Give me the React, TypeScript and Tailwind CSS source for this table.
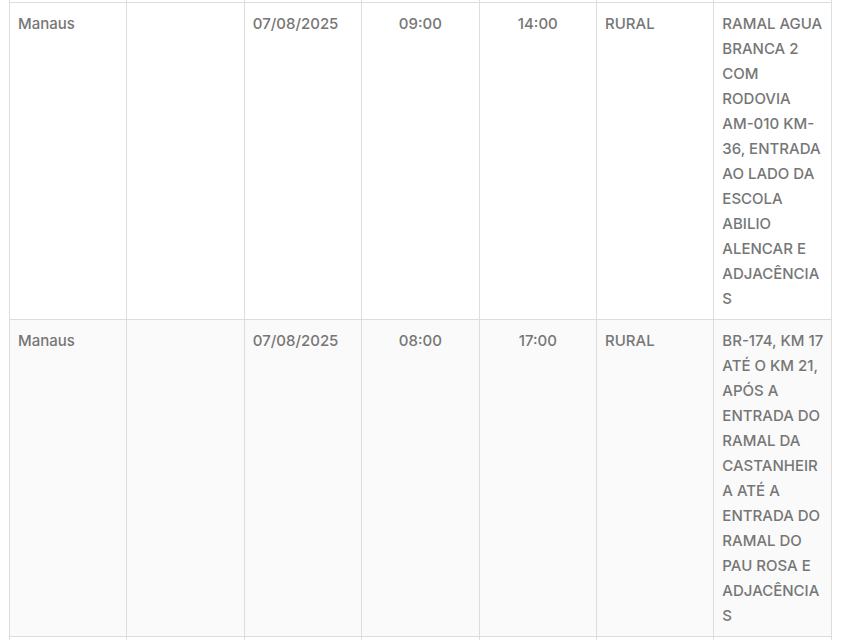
import React from 'react';

type Row = {
  city: string;
  district: string;
  date: string;
  start: string;
  end: string;
  zone: string;
  place: string[];
};

const rows: Row[] = [
  {
    city: 'Manaus',
    district: '',
    date: '07/08/2025',
    start: '09:00',
    end: '14:00',
    zone: 'RURAL',
    place: [
      'RAMAL AGUA',
      'BRANCA 2',
      'COM',
      'RODOVIA',
      'AM-010 KM-',
      '36, ENTRADA',
      'AO LADO DA',
      'ESCOLA',
      'ABILIO',
      'ALENCAR E',
      'ADJACÊNCIA',
      'S',
    ],
  },
  {
    city: 'Manaus',
    district: '',
    date: '07/08/2025',
    start: '08:00',
    end: '17:00',
    zone: 'RURAL',
    place: [
      'BR-174, KM 17',
      'ATÉ O KM 21,',
      'APÓS A',
      'ENTRADA DO',
      'RAMAL DA',
      'CASTANHEIR',
      'A ATÉ A',
      'ENTRADA DO',
      'RAMAL DO',
      'PAU ROSA E',
      'ADJACÊNCIA',
      'S',
    ],
  },
];

const cell = 'border border-[#dddddd] p-2 align-top';

export default function App() {
  return (
    <div className="h-[640px] w-[846px] overflow-hidden bg-white font-['Inter','Liberation_Sans',sans-serif] text-[15px] leading-[25px] font-medium text-[#767676]">
      <table className="ml-[9px] w-[822px] table-fixed border-collapse">
        <colgroup>
          {[0, 1, 2, 3, 4, 5, 6].map(i => (
            <col key={i} className="w-[117.4px]" />
          ))}
        </colgroup>
        <tbody>
          {/* tail of the previous row, cut off at the top */}
          <tr className="h-[2px]">
            {[0, 1, 2, 3, 4, 5, 6].map(i => (
              <td key={i} className="border-x border-b border-[#dddddd] p-0 leading-[0]"></td>
            ))}
          </tr>
          {rows.map((r, idx) => (
            <tr key={idx} className={idx % 2 === 1 ? 'bg-[#fafafa]' : 'bg-white'}>
              <td className={cell}>{r.city}</td>
              <td className={cell}>{r.district}</td>
              <td className={cell}>{r.date}</td>
              <td className={`${cell} text-center`}>{r.start}</td>
              <td className={`${cell} text-center`}>{r.end}</td>
              <td className={cell}>{r.zone}</td>
              <td className={cell}>
                {r.place.map((line, i) => (
                  <span key={i} className="block whitespace-nowrap">
                    {line}
                  </span>
                ))}
              </td>
            </tr>
          ))}
          <tr className="bg-white">
            {[0, 1, 2, 3, 4, 5, 6].map(i => (
              <td key={i} className={cell}>&nbsp;</td>
            ))}
          </tr>
        </tbody>
      </table>
    </div>
  );
}
